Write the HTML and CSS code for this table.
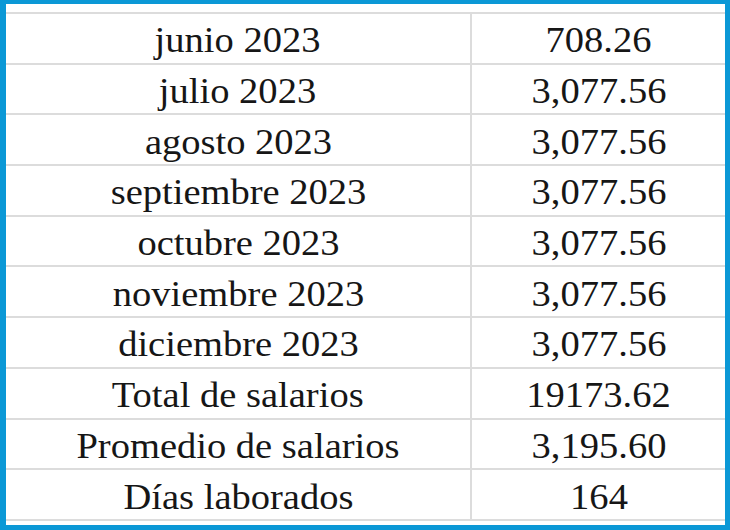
FILE: index.html
```html
<!DOCTYPE html>
<html lang="es">
<head>
<meta charset="utf-8">
<title>Salarios</title>
<link rel="stylesheet" href="styles.css">
</head>
<body>
<div class="frame">
  <table class="salaries">
    <tbody>
      <tr><td class="label"><span class="t">junio 2023</span></td><td class="value"><span class="t">708.26</span></td></tr>
      <tr><td class="label"><span class="t">julio 2023</span></td><td class="value"><span class="t">3,077.56</span></td></tr>
      <tr><td class="label"><span class="t">agosto 2023</span></td><td class="value"><span class="t">3,077.56</span></td></tr>
      <tr><td class="label"><span class="t">septiembre 2023</span></td><td class="value"><span class="t">3,077.56</span></td></tr>
      <tr><td class="label"><span class="t">octubre 2023</span></td><td class="value"><span class="t">3,077.56</span></td></tr>
      <tr><td class="label"><span class="t">noviembre 2023</span></td><td class="value"><span class="t">3,077.56</span></td></tr>
      <tr><td class="label"><span class="t">diciembre 2023</span></td><td class="value"><span class="t">3,077.56</span></td></tr>
      <tr><td class="label"><span class="t">Total de salarios</span></td><td class="value"><span class="t">19173.62</span></td></tr>
      <tr><td class="label"><span class="t">Promedio de salarios</span></td><td class="value"><span class="t">3,195.60</span></td></tr>
      <tr><td class="label"><span class="t">Días laborados</span></td><td class="value"><span class="t">164</span></td></tr>
    </tbody>
  </table>
</div>
</body>
</html>
```
FILE: styles.css
```css
html, body {
  margin: 0;
  padding: 0;
  background: #ffffff;
}
.frame {
  box-sizing: border-box;
  width: 730px;
  height: 530px;
  border-style: solid;
  border-color: #0b98d6;
  border-width: 4px 5px 5px 6px;
  padding-top: 8px;
  background: #ffffff;
  overflow: hidden;
}
.salaries {
  width: 100%;
  border-collapse: collapse;
  table-layout: fixed;
  font-family: "Liberation Serif", "Times New Roman", serif;
  font-size: 36px;
  color: #161616;
}
.salaries td {
  height: 44.7px;
  padding: 4px 0 0 0;
  border-top: 2px solid #dcdcdc;
  border-bottom: 2px solid #dcdcdc;
  text-align: center;
  vertical-align: middle;
  line-height: 1;
  white-space: nowrap;
}
.salaries .label {
  width: 464px;
  border-right: 2px solid #dcdcdc;
}
.t {
  display: inline-block;
  transform: scaleX(1.07);
}
```
